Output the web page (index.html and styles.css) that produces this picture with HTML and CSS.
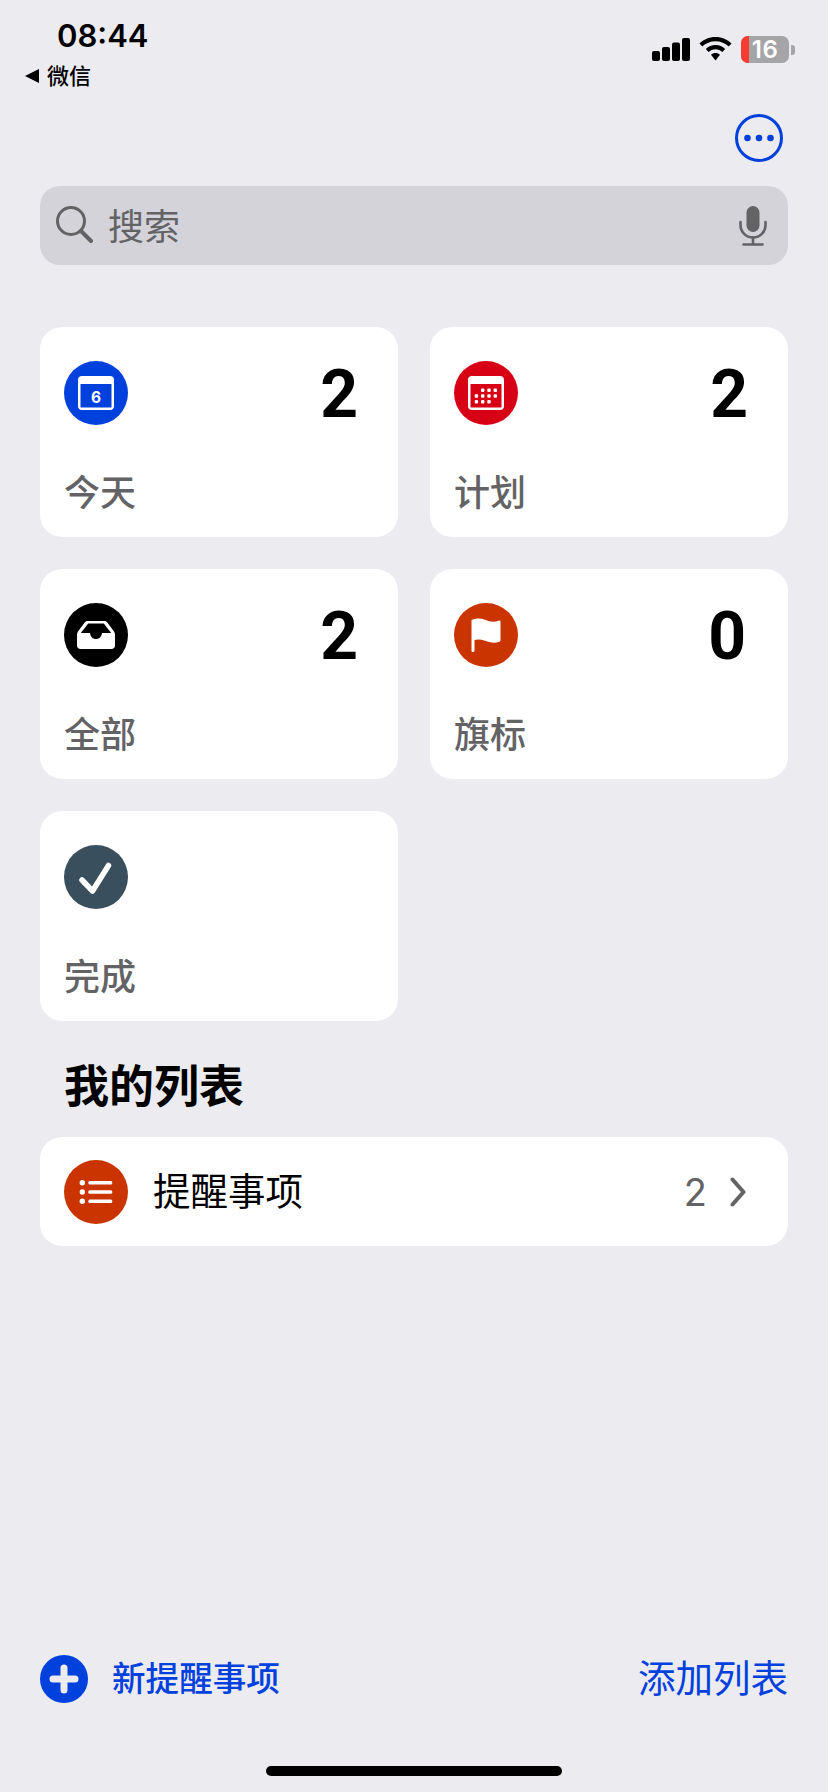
FILE: index.html
```html
<!DOCTYPE html>
<html lang="zh">
<head>
<meta charset="utf-8">
<title>提醒事项</title>
<link rel="stylesheet" href="styles.css">
</head>
<body>
<div class="page">
  <header class="status">
    <div class="status-left">
      <div class="time">08:44</div>
      <div class="back"><span class="back-arrow"></span><span>微信</span></div>
    </div>
    <div class="status-right">
      <svg class="signal" width="38" height="23" viewBox="0 0 38 23"><rect x="0" y="13" width="8" height="10" rx="2"/><rect x="10" y="9" width="8" height="14" rx="2"/><rect x="20" y="4.500" width="8" height="18.500" rx="2"/><rect x="30" y="0" width="8" height="23" rx="2"/></svg>
      <svg class="wifi" width="33" height="24" viewBox="0 0 33 24"><path d="M16.500 0C10 0 4.600 2.500 0.500 6.500L3.300 9.600C6.700 6.300 11.300 4.300 16.500 4.300S26.300 6.300 29.700 9.600L32.500 6.500C28.400 2.500 23 0 16.500 0Z"/><path d="M16.500 8C12.800 8 9.400 9.500 6.800 12L9.600 15C11.400 13.300 13.800 12.200 16.500 12.200S21.600 13.300 23.400 15L26.200 12C23.600 9.500 20.200 8 16.500 8Z"/><path d="M16.500 16C14.800 16 13.200 16.600 12 17.800L16.500 23.500L21 17.800C19.800 16.600 18.200 16 16.500 16Z"/></svg>
      <div class="battery">
        <div class="battery-body"><span class="battery-low"></span><span class="battery-num">16</span></div>
        <span class="battery-tip"></span>
      </div>
    </div>
  </header>

  <div class="toolbar">
    <svg width="48" height="48" viewBox="0 0 48 48"><circle cx="24" cy="24" r="22.500" fill="none" stroke="#0040dd" stroke-width="3"/><circle cx="12.500" cy="24" r="3.300" fill="#0040dd"/><circle cx="24" cy="24" r="3.300" fill="#0040dd"/><circle cx="35.500" cy="24" r="3.300" fill="#0040dd"/></svg>
  </div>

  <div class="search">
    <svg class="search-icon" width="37" height="37" viewBox="0 0 37 37"><circle cx="15" cy="15" r="13.500" fill="none" stroke="#636366" stroke-width="3"/><path d="M25 25L35 35" stroke="#636366" stroke-width="4" stroke-linecap="round"/></svg>
    <span class="search-text">搜索</span>
    <svg class="mic" width="28" height="40" viewBox="0 0 28 40"><rect x="7.500" y="0" width="13" height="26" rx="6.500" fill="#636366"/><path d="M1.500 16V19C1.500 26 7 31.500 14 31.500S26.500 26 26.500 19V16" fill="none" stroke="#636366" stroke-width="2.600" stroke-linecap="round"/><path d="M14 31.500V38M4.500 38.500H23.500" fill="none" stroke="#636366" stroke-width="2.600" stroke-linecap="round"/></svg>
  </div>

  <section class="cards">
    <article class="card">
      <div class="card-top">
        <span class="disc disc-blue">
          <svg width="64" height="64" viewBox="0 0 64 64"><path fill-rule="evenodd" fill="#fff" d="M18 15H46A4 4 0 0 1 50 19V45A4 4 0 0 1 46 49H18A4 4 0 0 1 14 45V19A4 4 0 0 1 18 15ZM16.500 23V46.500H47.500V23Z"/><text x="32" y="41.500" class="cal-day">6</text></svg>
        </span>
        <span class="count">2</span>
      </div>
      <div class="card-label">今天</div>
    </article>

    <article class="card">
      <div class="card-top">
        <span class="disc disc-red">
          <svg width="64" height="64" viewBox="0 0 64 64"><path fill-rule="evenodd" fill="#fff" d="M18 15H46A4 4 0 0 1 50 19V45A4 4 0 0 1 46 49H18A4 4 0 0 1 14 45V19A4 4 0 0 1 18 15ZM16.500 23V46.500H47.500V23Z"/><g fill="#fff"><rect x="27" y="27.500" width="3.400" height="3.400" rx="1"/><rect x="33.300" y="27.500" width="3.400" height="3.400" rx="1"/><rect x="39.600" y="27.500" width="3.400" height="3.400" rx="1"/><rect x="20.700" y="33.300" width="3.400" height="3.400" rx="1"/><rect x="27" y="33.300" width="3.400" height="3.400" rx="1"/><rect x="33.300" y="33.300" width="3.400" height="3.400" rx="1"/><rect x="39.600" y="33.300" width="3.400" height="3.400" rx="1"/><rect x="20.700" y="39" width="3.400" height="3.400" rx="1"/><rect x="27" y="39" width="3.400" height="3.400" rx="1"/><rect x="33.300" y="39" width="3.400" height="3.400" rx="1"/></g></svg>
        </span>
        <span class="count">2</span>
      </div>
      <div class="card-label">计划</div>
    </article>

    <article class="card">
      <div class="card-top">
        <span class="disc disc-black">
          <svg width="64" height="64" viewBox="0 0 64 64"><path fill="#fff" fill-rule="evenodd" d="M23.500 18H40.500C41.700 18 42.700 18.600 43.400 19.600L50 28.500C50.700 29.500 51 30.500 51 31.700V42.500C51 44.800 49.600 46 47.500 46H16.500C14.400 46 13 44.800 13 42.500V31.700C13 30.500 13.300 29.500 14 28.500L20.600 19.600C21.300 18.600 22.300 18 23.500 18ZM24.200 20.500L16.800 30H26C26.500 33.900 28.700 36 32 36S37.500 33.900 38 30H47.200L39.800 20.500Z"/></svg>
        </span>
        <span class="count">2</span>
      </div>
      <div class="card-label">全部</div>
    </article>

    <article class="card">
      <div class="card-top">
        <span class="disc disc-orange">
          <svg width="64" height="64" viewBox="0 0 64 64"><path fill="#fff" d="M17.500 17C22 15 27 15 31 16.800C36 19 41 19.300 45 17.500C45.800 17.200 46.500 17.600 46.500 18.500V37.300C46.500 38 46.200 38.400 45.500 38.700C41 40.300 36 39.800 31 37.800C27.500 36.400 23.500 36 20.500 37V47.500C20.500 48.600 19.900 49 19 49S17.500 48.600 17.500 47.500Z"/></svg>
        </span>
        <span class="count count-zero">0</span>
      </div>
      <div class="card-label">旗标</div>
    </article>

    <article class="card">
      <div class="card-top">
        <span class="disc disc-slate">
          <svg width="64" height="64" viewBox="0 0 64 64"><path d="M18 35L28.500 46L44.500 20.500" fill="none" stroke="#fff" stroke-width="5.500" stroke-linecap="round" stroke-linejoin="round"/></svg>
        </span>
      </div>
      <div class="card-label">完成</div>
    </article>
  </section>

  <h2 class="section-title">我的列表</h2>

  <div class="list-row">
    <span class="disc disc-orange">
      <svg width="64" height="64" viewBox="0 0 64 64"><g fill="#fff"><circle cx="18.300" cy="22.700" r="2.700"/><circle cx="18.300" cy="32" r="2.700"/><circle cx="18.300" cy="41.300" r="2.700"/><rect x="24.300" y="21" width="24" height="3.500" rx="1.500"/><rect x="24.300" y="30.300" width="24" height="3.500" rx="1.500"/><rect x="24.300" y="39.500" width="24" height="3.500" rx="1.500"/></g></svg>
    </span>
    <span class="list-name">提醒事项</span>
    <span class="list-count">2</span>
    <svg class="chevron" width="16" height="30" viewBox="0 0 16 30"><path d="M2.500 2.500L13.500 15L2.500 27.500" fill="none" stroke="#636366" stroke-width="4" stroke-linecap="round" stroke-linejoin="round"/></svg>
  </div>

  <footer class="bottom">
    <div class="new-item">
      <svg width="48" height="48" viewBox="0 0 48 48"><circle cx="24" cy="24" r="24" fill="#0040dd"/><path d="M24 13V35M13 24H35" stroke="#ebebf0" stroke-width="7" stroke-linecap="round"/></svg>
      <span class="new-text">新提醒事项</span>
    </div>
    <span class="add-list">添加列表</span>
  </footer>

  <div class="home-wrap"><div class="home-bar"></div></div>
</div>
</body>
</html>
```

FILE: styles.css
```css
* {
  box-sizing: border-box;
}

html,
body {
  margin: 0;
  padding: 0;
}

body {
  background: #ebebf0;
  color: #000;
  font-family: Inter, "Noto Sans CJK SC", sans-serif;
}

.page {
  display: flex;
  flex-direction: column;
  width: 828px;
  height: 1792px;
  padding: 0 40px;
  overflow: hidden;
}

/* Status bar */
.status {
  display: flex;
  justify-content: space-between;
  height: 110px;
  margin: 0 -40px;
  padding: 0 33px 0 25px;
}

.status-left {
  display: flex;
  flex-direction: column;
}

.time {
  height: 41px;
  margin: 15px 0 0 32px;
  font-size: 31px;
  font-weight: 600;
  line-height: 41px;
}

.back {
  display: flex;
  align-items: center;
  gap: 8px;
  height: 30px;
  margin-top: 5px;
  font-size: 22px;
  font-weight: 500;
  line-height: 30px;
}

.back-arrow {
  width: 0;
  height: 0;
  border-top: 7px solid transparent;
  border-bottom: 7px solid transparent;
  border-right: 14px solid #000;
}

.status-right {
  display: flex;
  align-items: flex-start;
  padding-top: 36px;
}

.signal {
  margin: 2px 9px 0 0;
}

.wifi {
  margin: 1px 9px 0 0;
}

.battery {
  display: flex;
  align-items: center;
}

.battery-body {
  position: relative;
  width: 48px;
  height: 27px;
  border-radius: 7px;
  background: #a5a5a8;
  overflow: hidden;
  text-align: center;
}

.battery-low {
  position: absolute;
  top: 0;
  bottom: 0;
  left: 0;
  width: 8px;
  background: #f63b30;
}

.battery-num {
  position: relative;
  display: block;
  color: #fff;
  font-size: 24px;
  font-weight: 600;
  line-height: 27px;
  letter-spacing: 0.500px;
}

.battery-tip {
  width: 4px;
  height: 10px;
  margin-left: 2px;
  border-radius: 0 3px 3px 0;
  background: #a5a5a8;
}

/* Top toolbar */
.toolbar {
  display: flex;
  justify-content: flex-end;
  height: 76px;
  padding: 4px 5px 0 0;
}

/* Search field */
.search {
  display: flex;
  align-items: center;
  height: 79px;
  padding: 0 21px 0 16px;
  border-radius: 20px;
  background: #d3d3d9;
}

.search-icon {
  margin: 0 15px 2px 0;
}

.search-text {
  flex: 1;
  margin-top: 3px;
  color: #636366;
  font-size: 36px;
  line-height: 44px;
}

/* Smart list cards */
.cards {
  display: grid;
  grid-template-columns: 358px 358px;
  gap: 32px;
  margin-top: 62px;
}

.card {
  display: flex;
  flex-direction: column;
  height: 210px;
  padding: 34px 24px 0;
  border-radius: 22px;
  background: #fff;
}

.card-top {
  display: flex;
  justify-content: space-between;
  height: 64px;
}

.disc {
  display: block;
  flex: none;
  width: 64px;
  height: 64px;
  border-radius: 50%;
}

.disc svg {
  display: block;
}

.disc-blue {
  background: #0040dd;
}

.disc-red {
  background: #d70015;
}

.disc-black {
  background: #000;
}

.disc-orange {
  background: #c93400;
}

.disc-slate {
  background: #3a4f5e;
}

.cal-day {
  fill: #fff;
  font-family: Inter, sans-serif;
  font-size: 15.500px;
  font-weight: 700;
  text-anchor: middle;
}

.count {
  margin: 2px 16px 0 0;
  font-family: Roboto, sans-serif;
  font-size: 66px;
  font-weight: 700;
  line-height: 64px;
}

.count-zero {
  margin-right: 18px;
}

.card-label {
  margin-top: 44px;
  color: #636366;
  font-size: 36px;
  font-weight: 500;
  line-height: 48px;
}

/* My lists */
.section-title {
  height: 55px;
  margin: 36px 0 0 24px;
  font-size: 45px;
  font-weight: 700;
  line-height: 60px;
}

.list-row {
  display: flex;
  align-items: center;
  height: 109px;
  margin-top: 25px;
  padding: 0 42px 0 24px;
  border-radius: 22px;
  background: #fff;
}

.list-name {
  flex: 1;
  margin-left: 25px;
  font-size: 37.500px;
  line-height: 50px;
}

.list-count {
  margin-right: 23px;
  color: #636366;
  font-size: 38px;
  line-height: 50px;
}

/* Bottom toolbar */
.bottom {
  display: flex;
  justify-content: space-between;
  align-items: center;
  height: 60px;
  margin-top: 403px;
}

.new-item {
  display: flex;
  align-items: center;
  gap: 24px;
}

.new-item svg {
  display: block;
}

.new-text {
  color: #0040dd;
  font-size: 33.600px;
  font-weight: 500;
  line-height: 48px;
}

.add-list {
  color: #0040dd;
  font-size: 37.500px;
  line-height: 50px;
}

.home-wrap {
  display: flex;
  justify-content: center;
  margin-top: 57px;
}

.home-bar {
  width: 296px;
  height: 10px;
  border-radius: 5px;
  background: #000;
}
```
